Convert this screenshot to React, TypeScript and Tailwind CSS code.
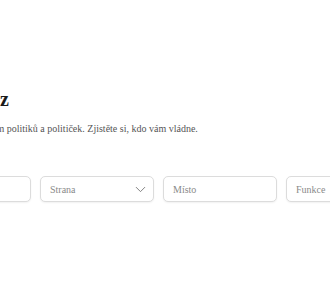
import React from 'react';
import { ChevronDown } from 'lucide-react';

const serif = { fontFamily: '"Liberation Serif", "DejaVu Serif", serif' };

function Field({ placeholder, select }: { placeholder: string; select?: boolean }) {
  return (
    <div className="h-[26px] flex items-center justify-between pl-[9px] pr-[4px] rounded-[5px] border border-[#dcdcdc] bg-white shadow-[0_1px_2px_rgba(0,0,0,0.06)]">
      <span className="text-[10px] text-[#8a8a8a]">{placeholder}</span>
      {select && <ChevronDown className="w-[17px] h-[17px] text-[#777]" strokeWidth={1.3} />}
    </div>
  );
}

export default function App() {
  return (
    <div className="w-[330px] h-[300px] overflow-hidden bg-white" style={serif}>
      <div className="ml-[-83px] w-[483px] pt-[88px]">
        {/* Header */}
        <div className="pl-[12px]">
          <h1 className="pl-[21px] text-[20px] leading-[22px] font-bold text-[#1a1a1a]">Průřez</h1>
          <p className="mt-[12px] text-[10px] leading-[14px] text-[#555]">
            Kompletní seznam politiků a političek. Zjistěte si, kdo vám vládne.
          </p>
        </div>

        {/* Filters */}
        <div className="mt-[40px] grid grid-cols-4 gap-[9px]">
          <Field placeholder="Jméno" />
          <Field placeholder="Strana" select />
          <Field placeholder="Místo" />
          <Field placeholder="Funkce" select />
        </div>
      </div>
    </div>
  );
}
